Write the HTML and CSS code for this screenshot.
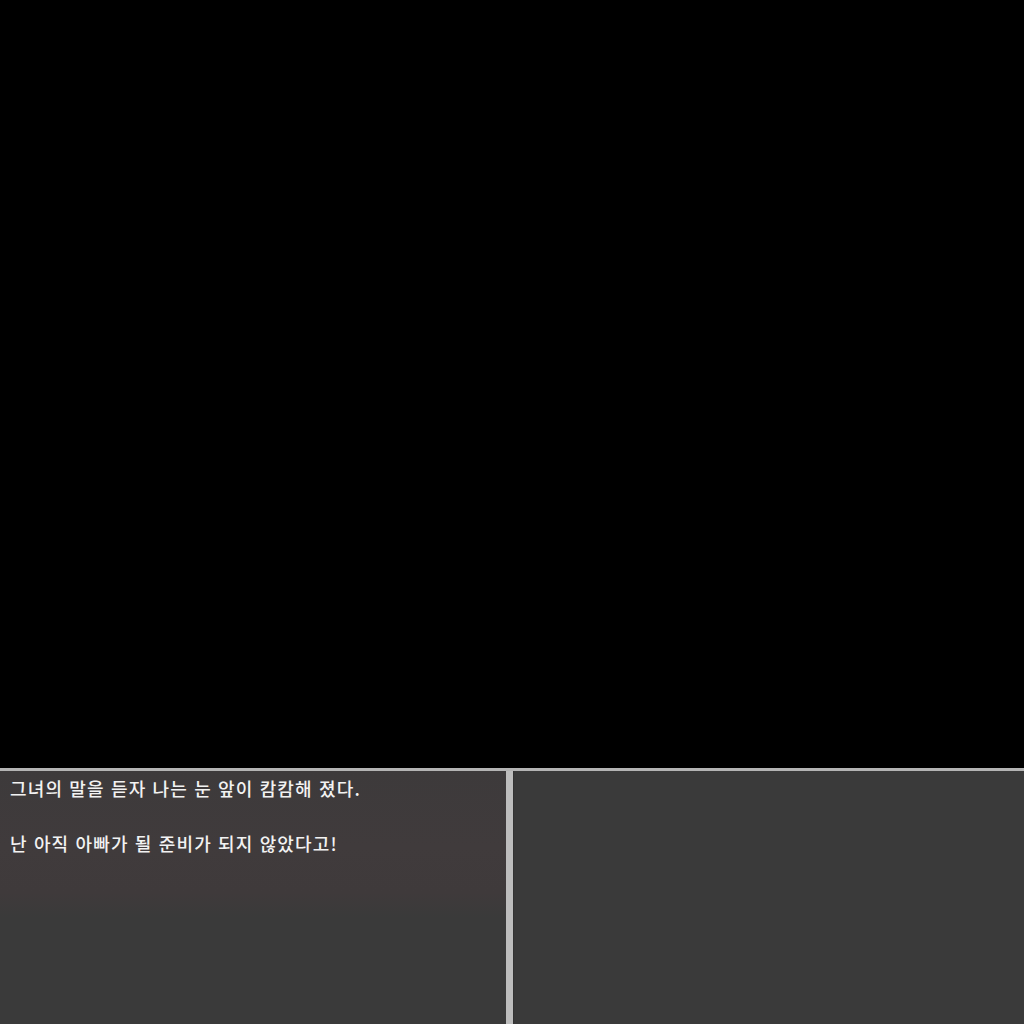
FILE: index.html
```html
<!DOCTYPE html>
<html lang="ko">
<head>
<meta charset="utf-8">
<link rel="stylesheet" href="styles.css">
</head>
<body>
<div class="screen">
  <div class="stage"></div>
  <div class="hud">
    <div class="panel message">
      <p class="line">그녀의 말을 듣자 나는 눈 앞이 캄캄해 졌다.</p>
      <p class="line blank">&nbsp;</p>
      <p class="line">난 아직 아빠가 될 준비가 되지 않았다고!</p>
    </div>
    <div class="divider"></div>
    <div class="panel side"></div>
  </div>
</div>
</body>
</html>
```
FILE: styles.css
```css
html, body {
  margin: 0;
  padding: 0;
  background: #000;
}
.screen {
  width: 1024px;
  height: 1024px;
  display: flex;
  flex-direction: column;
}
.stage {
  height: 768px;
  background: #000;
}
.hud {
  flex: 1;
  display: flex;
  border-top: 3px solid #b4b4b4;
}
.panel {
  background: #3a3a3a;
}
.message {
  width: 506px;
  padding: 4px 0 0 10px;
  box-sizing: border-box;
  background: linear-gradient(180deg, #3d3a3b 0%, #403b3c 30%, #3f3a3b 48%, #3a3a3a 58%, #3a3a3a 100%);
}
.line {
  margin: 0;
  color: #f2f2f2;
  font-family: "Noto Sans CJK KR", "Noto Sans", sans-serif;
  font-size: 18px;
  font-weight: 500;
  line-height: 27.5px;
  letter-spacing: 1.15px;
  white-space: nowrap;
}
.divider {
  width: 7px;
  background: #bdbdbd;
}
.side {
  flex: 1;
  border-left: 1px solid #333;
}
```
